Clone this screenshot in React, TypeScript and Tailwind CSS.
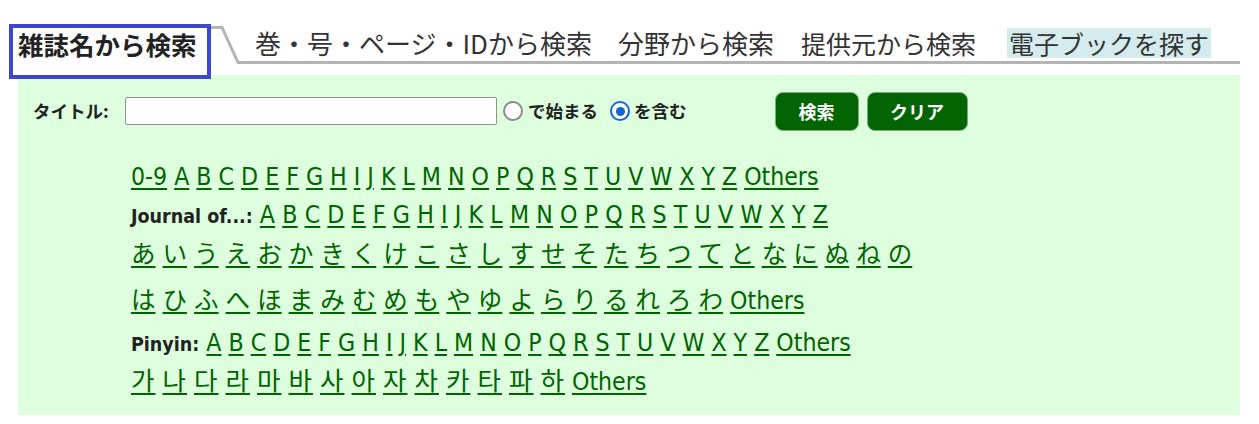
import React from 'react';

const LETTERS = 'ABCDEFGHIJKLMNOPQRSTUVWXYZ'.split('');
const KANA1 = 'あいうえおかきくけこさしすせそたちつてとなにぬねの'.split('');
const KANA2 = 'はひふへほまみむめもやゆよらりるれろわ'.split('');
const HANGUL = '가나다라마바사아자차카타파하'.split('');

const latin = "font-['DejaVu_Sans_Condensed','DejaVu_Sans',sans-serif] font-stretch-condensed";
const cjk = "font-['Noto_Sans_CJK_JP',sans-serif]";

// one underlined link per item, plain spaces between them
const Links = ({ items, className = '' }: { items: string[]; className?: string }) => (
  <>
    {items.map((t, i) => (
      <React.Fragment key={t + i}>
        {i > 0 && ' '}
        <a href="#" className={`text-[#006400] underline decoration-2 underline-offset-[3px] ${className}`}>
          {t}
        </a>
      </React.Fragment>
    ))}
  </>
);

const Radio = ({ checked }: { checked?: boolean }) => (
  <span
    className={`inline-flex w-[20px] h-[20px] rounded-full items-center justify-center bg-white ${
      checked ? 'border-[2.5px] border-[#1464d2]' : 'border-[2.5px] border-[#8c8c8c]'
    }`}
  >
    {checked && <span className="w-[9px] h-[9px] rounded-full bg-[#1464d2]" />}
  </span>
);

const Tabs = () => (
  <div className="flex items-start pt-[24px] w-[1240px]">
    <div className={`relative z-10 ml-[9px] w-[202px] h-[55px] shrink-0 border-[4px] border-[#3f48cc] bg-white pl-[5px] text-[25.5px] leading-[32px] font-bold text-[#222] ${cjk}`}>
      雑誌名から検索
    </div>
    <svg width="34" height="40" viewBox="0 0 34 40" className="shrink-0">
      <path d="M0 3.5 H11 L27 38.5 H34" fill="none" stroke="#b4b4b4" strokeWidth="3" />
    </svg>
    <div className={`flex-1 h-[40px] border-b-[3px] border-[#b4b4b4] flex items-center leading-[30px] text-[#333] ${cjk}`}>
      <span className="ml-[10px] text-[26px]">巻・号・ページ・IDから検索</span>
      <span className="ml-[26px] text-[26px]">分野から検索</span>
      <span className="ml-[27px] text-[25px]">提供元から検索</span>
      <span className="ml-[31px] px-[2px] text-[25px] bg-[#d5ecef]">電子ブックを探す</span>
    </div>
  </div>
);

const SearchForm = () => (
  <div className="flex items-center h-[40px] pl-[15px]">
    <span className={`w-[92px] text-[17.5px] font-bold text-[#222] ${cjk}`}>タイトル:</span>
    <input
      type="text"
      className="w-[372px] h-[28px] bg-white border border-[#8f8f8f] rounded-[2px] outline-none"
    />
    <label className={`ml-[6px] flex items-center gap-[5px] text-[17.5px] font-bold text-[#222] ${cjk}`}>
      <Radio />
      で始まる
    </label>
    <label className={`ml-[12px] flex items-center gap-[4px] text-[17.5px] font-bold text-[#222] ${cjk}`}>
      <Radio checked />
      を含む
    </label>
    <div className="ml-[88px] flex gap-[8px]">
      <button className={`w-[84px] h-[39px] rounded-[8px] bg-[#006400] border border-[#7fa87f] text-white text-[18px] font-bold ${cjk}`}>
        検索
      </button>
      <button className={`w-[101px] h-[39px] rounded-[8px] bg-[#006400] border border-[#7fa87f] text-white text-[18px] font-bold ${cjk}`}>
        クリア
      </button>
    </div>
  </div>
);

const IndexRows = () => (
  <div className={`mt-[26px] pl-[113px] text-[24.6px] ${latin}`}>
    <div className="h-[39px] leading-[40px] whitespace-nowrap">
      <Links items={['0-9', ...LETTERS, 'Others']} />
    </div>
    <div className="h-[38px] leading-[38px] whitespace-nowrap">
      <span className="text-[19.5px] font-bold text-[#222]">Journal of...:</span>{' '}
      <Links items={LETTERS} className="tracking-[0.2px]" />
    </div>
    <div className="h-[42px] leading-[38px] whitespace-nowrap">
      <Links items={KANA1} className={`text-[24.5px] ${cjk}`} />
    </div>
    <div className="h-[45px] leading-[45px] whitespace-nowrap">
      <Links items={KANA2} className={`text-[24.5px] ${cjk}`} /> <Links items={['Others']} />
    </div>
    <div className="h-[41px] leading-[43px] whitespace-nowrap">
      <span className="text-[19.5px] font-bold text-[#222]">Pinyin:</span>{' '}
      <Links items={[...LETTERS, 'Others']} />
    </div>
    <div className="h-[39px] leading-[33px] whitespace-nowrap">
      <Links items={HANGUL} className="text-[25.5px] tracking-[1px] font-['Noto_Sans_CJK_KR',sans-serif]" />{' '}
      <Links items={['Others']} />
    </div>
  </div>
);

export default function App() {
  return (
    <div className="w-[1259px] h-[424px] bg-white overflow-hidden">
      <Tabs />
      <div className="relative -mt-[4px] ml-[18px] w-[1222px] h-[340px] bg-[#ddffdd] pt-[16px]">
        <SearchForm />
        <IndexRows />
      </div>
    </div>
  );
}
